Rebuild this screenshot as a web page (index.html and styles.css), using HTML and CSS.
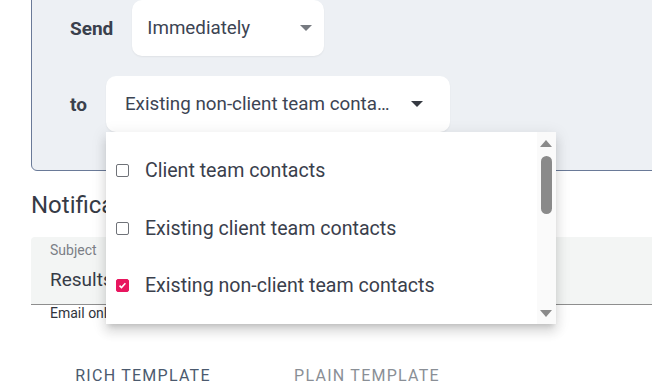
FILE: index.html
```html
<!DOCTYPE html>
<html lang="en">
<head>
    <meta charset="UTF-8">
    <meta name="viewport" content="width=device-width, initial-scale=1.0">
    <title>Notification settings</title>
    <link rel="stylesheet" href="styles.css">
</head>
<body>
    <div class="page">
        <section class="panel">
            <div class="row">
                <span class="row-label">Send</span>
                <div class="select select-when">
                    <span class="select-value">Immediately</span>
                    <span class="caret caret-muted"></span>
                </div>
            </div>
            <div class="row">
                <span class="row-label">to</span>
                <div class="select select-to">
                    <span class="select-value">Existing non-client team contacts</span>
                    <span class="caret"></span>
                    <div class="menu">
                        <ul class="menu-list">
                            <li class="menu-item"><span class="check"></span>Client team contacts</li>
                            <li class="menu-item"><span class="check"></span>Existing client team contacts</li>
                            <li class="menu-item"><span class="check checked"><svg viewBox="0 0 14 14" width="13" height="13"><path d="M3.2 7.2l2.5 2.4 5-5.4" fill="none" stroke="#fff" stroke-width="2"/></svg></span>Existing non-client team contacts</li>
                            <li class="menu-item"><span class="check"></span>All team contacts</li>
                        </ul>
                        <div class="scrollbar">
                            <span class="sb-arrow sb-up"></span>
                            <span class="sb-thumb"></span>
                            <span class="sb-arrow sb-down"></span>
                        </div>
                    </div>
                </div>
            </div>
        </section>

        <h2 class="section-title">Notification email</h2>

        <div class="field">
            <label class="field-label">Subject</label>
            <div class="field-value">Results of your latest survey</div>
        </div>
        <p class="hint">Email only sent when there are new results</p>

        <div class="tabs">
            <button type="button" class="tab active">Rich template</button>
            <button type="button" class="tab">Plain template</button>
        </div>
    </div>
</body>
</html>
```

FILE: styles.css
```css
body
{
    margin: 0;
    font-family: Roboto, "Noto Sans", sans-serif;
    color: #3c4453;
    background: #fff;
    overflow: hidden;
}
.page
{
    width: 900px;
    padding-left: 31px;
}
.panel
{
    margin-top: -12px;
    padding: 11px 0 38px 38px;
    background: #edf0f4;
    border: 1px solid #6a7a98;
    border-radius: 6px;
    display: grid;
    gap: 20px;
}
.row
{
    display: flex;
    align-items: center;
    gap: 19px;
}
.row-label
{
    font-size: 19px;
    font-weight: bold;
    color: #3a404c;
}
.select
{
    position: relative;
    display: flex;
    align-items: center;
    gap: 16px;
    height: 56px;
    box-sizing: border-box;
    background: #fff;
    border-radius: 10px;
    box-shadow: 0 1px 2px rgba(0, 0, 0, .06);
    font-size: 18.8px;
}
.select-value
{
    flex: 1;
    white-space: nowrap;
    overflow: hidden;
    text-overflow: ellipsis;
}
.select-when
{
    width: 192px;
    padding: 0 12px 0 15px;
}
.select-to
{
    width: 344px;
    padding: 0 27px 0 19px;
}
.caret
{
    width: 0;
    height: 0;
    border-left: 6px solid transparent;
    border-right: 6px solid transparent;
    border-top: 6px solid #363a42;
}
.caret-muted
{
    border-top-color: #767a80;
}
.menu
{
    position: absolute;
    top: 100%;
    left: 0;
    width: 450px;
    height: 192px;
    display: flex;
    background: #fff;
    overflow: hidden;
    box-shadow: 0 5px 5px -3px rgba(0, 0, 0, .14), 0 8px 10px 1px rgba(0, 0, 0, .09), 0 3px 14px 2px rgba(0, 0, 0, .08);
    z-index: 2;
}
.menu-list
{
    flex: 1;
    list-style: none;
    margin: 0;
    padding: 10px 0 0 10px;
}
.menu-item
{
    display: flex;
    align-items: center;
    height: 57.5px;
    font-size: 19.6px;
    color: #3a404c;
    white-space: nowrap;
}
.check
{
    flex: none;
    width: 13px;
    height: 13px;
    box-sizing: border-box;
    margin-right: 16px;
    border: 1.5px solid #6f7278;
    border-radius: 2px;
    display: flex;
    align-items: center;
    justify-content: center;
}
.check.checked
{
    background: #e8165f;
    border-color: #e8165f;
}
.scrollbar
{
    flex: none;
    width: 19px;
    background: #fafafa;
    display: flex;
    flex-direction: column;
    align-items: center;
    padding: 8px 0 7px;
    box-sizing: border-box;
}
.sb-arrow
{
    width: 0;
    height: 0;
    border-left: 6px solid transparent;
    border-right: 6px solid transparent;
}
.sb-up
{
    border-bottom: 7px solid #8a8a8a;
}
.sb-down
{
    margin-top: auto;
    border-top: 7px solid #8a8a8a;
}
.sb-thumb
{
    width: 11px;
    height: 58px;
    margin-top: 9px;
    border-radius: 6px;
    background: #8a8a8a;
}
.section-title
{
    margin: 20px 0 18px;
    font-size: 24px;
    line-height: 28px;
    font-weight: normal;
    color: #363b46;
}
.field
{
    background: #f3f5f4;
    border-bottom: 1px solid #8e8e8e;
    border-radius: 4px 4px 0 0;
    padding: 5px 19px 12px;
}
.field-label
{
    display: block;
    font-size: 14px;
    line-height: 16px;
    color: #7b7f86;
}
.field-value
{
    margin-top: 10px;
    font-size: 19px;
    line-height: 24px;
    color: #363b46;
}
.hint
{
    margin: 0;
    padding-left: 19px;
    font-size: 14px;
    line-height: 16px;
    color: #30343c;
}
.tabs
{
    display: flex;
    margin-top: 31px;
}
.tab
{
    width: 224px;
    height: 48px;
    border: none;
    background: none;
    font-family: inherit;
    font-size: 16px;
    line-height: 18px;
    letter-spacing: 1.25px;
    text-transform: uppercase;
    color: #8a8f96;
    cursor: pointer;
}
.tab.active
{
    color: #4b5a6e;
}
```
